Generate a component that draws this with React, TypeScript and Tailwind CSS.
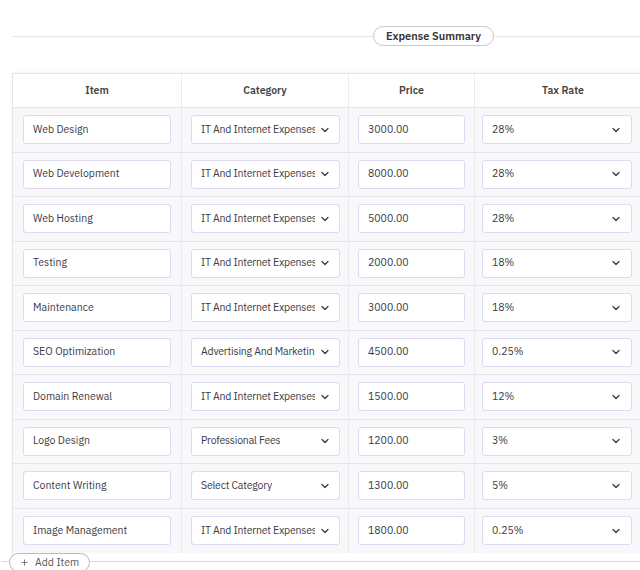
import React from 'react';
import { ChevronDown, Plus } from 'lucide-react';

const rows = [
  ['Web Design', 'IT And Internet Expenses', '3000.00', '28%'],
  ['Web Development', 'IT And Internet Expenses', '8000.00', '28%'],
  ['Web Hosting', 'IT And Internet Expenses', '5000.00', '28%'],
  ['Testing', 'IT And Internet Expenses', '2000.00', '18%'],
  ['Maintenance', 'IT And Internet Expenses', '3000.00', '18%'],
  ['SEO Optimization', 'Advertising And Marketing', '4500.00', '0.25%'],
  ['Domain Renewal', 'IT And Internet Expenses', '1500.00', '12%'],
  ['Logo Design', 'Professional Fees', '1200.00', '3%'],
  ['Content Writing', 'Select Category', '1300.00', '5%'],
  ['Image Management', 'IT And Internet Expenses', '1800.00', '0.25%'],
];

const box = 'h-[29px] flex items-center px-[9px] rounded-[3px] border border-[#dcd9f0] bg-white text-[10.5px] text-[#3a3a44] overflow-hidden whitespace-nowrap';

const App: React.FC = () => (
  <div className="w-[640px] h-[570px] overflow-hidden bg-white" style={{ fontFamily: '"IBM Plex Sans", "Noto Sans", sans-serif' }}>
    <div className="pt-[26px] pl-[12px] flex items-center">
      <div className="h-px bg-[#e6e6ea] flex-1" />
      <div className="h-[20px] px-[12px] rounded-full border border-[#c9c9d0] text-[11px] font-semibold text-[#333] flex items-center">Expense Summary</div>
      <div className="h-px bg-[#e6e6ea] w-[146px]" />
    </div>
    <div className="mt-[27px] ml-[12px] w-[640px] border-t border-l border-[#e4e4ea] shadow-[0_-1px_3px_rgba(0,0,0,0.05)]">
      <div className="grid grid-cols-[169px_167px_126px_1fr] h-[34px] border-b border-[#e4e4ea] text-[10.5px] font-semibold text-[#444]">
        {['Item', 'Category', 'Price', 'Tax Rate'].map((h) => (
          <div key={h} className="flex items-center justify-center border-r border-[#ececf0]">{h}</div>
        ))}
      </div>
      {rows.map(([item, cat, price, tax], i) => (
        <div key={item} className={`grid grid-cols-[169px_167px_126px_1fr] h-[44.5px] bg-[#f8f8fa] ${i < rows.length - 1 ? 'border-b border-[#e4e4ea]' : ''}`}>
          <div className="flex items-center px-[10px] border-r border-[#ececf0]"><div className={`${box} w-[150px]`}>{item}</div></div>
          <div className="flex items-center pl-[9px] border-r border-[#ececf0]">
            <div className={`${box} w-[149px] justify-between pr-[8px] tracking-[-0.2px]`}>
              <span className="overflow-hidden">{cat}</span>
              <ChevronDown className="w-3 h-3 shrink-0 ml-1" strokeWidth={2.5} />
            </div>
          </div>
          <div className="flex items-center pl-[9px] border-r border-[#ececf0]"><div className={`${box} w-[107px]`}>{price}</div></div>
          <div className="flex items-center pl-[7px]">
            <div className={`${box} w-[150px] justify-between pr-[9px]`}>
              <span>{tax}</span>
              <ChevronDown className="w-3 h-3" strokeWidth={2.5} />
            </div>
          </div>
        </div>
      ))}
      <div className="relative h-[20px] border-t border-[#d8d8de] -ml-[12px] mt-[8px]">
        <div className="absolute left-[8px] -top-[9px] h-[19px] px-[10px] rounded-full border border-[#b8b8c0] bg-white text-[10.5px] text-[#555] flex items-center gap-[6px]">
          <Plus className="w-[9px] h-[9px]" strokeWidth={2} /> Add Item
        </div>
      </div>
    </div>
  </div>
);

export default App;
